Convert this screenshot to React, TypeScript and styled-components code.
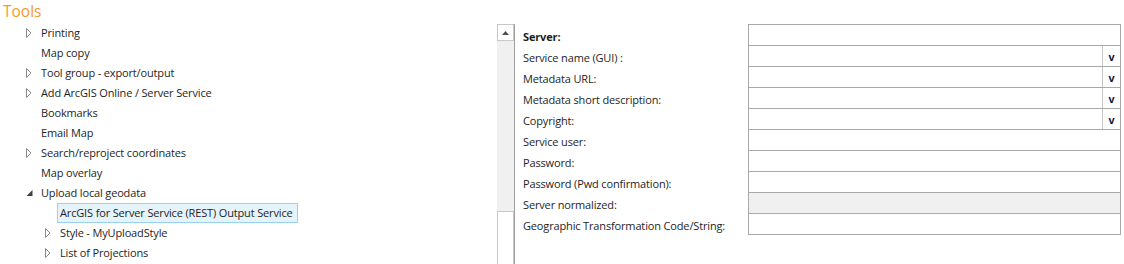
import React from 'react'
import styled, { createGlobalStyle } from 'styled-components'

const GlobalStyle = createGlobalStyle`
  html, body {
    margin: 0;
    padding: 0;
    background: #ffffff;
  }
  body {
    font-family: 'Open Sans', 'Noto Sans', sans-serif;
    font-size: 11px;
    letter-spacing: -0.15px;
    color: #1e1e1e;
  }
`

const Page = styled.div`
  width: 1124px;
  height: 264px;
  overflow: hidden;
  display: flex;
  flex-direction: column;
`

const Title = styled.div`
  height: 23px;
  padding-left: 3px;
  font-size: 15.5px;
  letter-spacing: 0;
  line-height: 22px;
  color: #f29b2c;
`

const Body = styled.div`
  flex: 1;
  display: flex;
  min-height: 0;
`

const TreePane = styled.div`
  width: 497px;
  display: flex;
  flex-direction: column;
`

const TreeRow = styled.div<{ level: number }>`
  height: 20px;
  display: flex;
  align-items: center;
  padding-left: ${(p) => 25 + p.level * 19}px;
`

const Toggle = styled.span`
  width: 16px;
  height: 20px;
  display: flex;
  align-items: center;
  justify-content: flex-start;
`

const TreeLabel = styled.span<{ selected?: boolean }>`
  height: 18px;
  line-height: 18px;
  padding: 0 4px 0 2px;
  margin-left: -3px;
  border: 1px solid ${(p) => (p.selected ? '#99d1f3' : 'transparent')};
  background: ${(p) => (p.selected ? '#e5f3fb' : 'transparent')};
  white-space: nowrap;
`

const ScrollBar = styled.div`
  width: 17px;
  display: flex;
  flex-direction: column;
  background: #f0f0f0;
  border-right: 1px solid #a0a0a0;
  margin-top: 1px;
`

const ScrollButton = styled.div`
  height: 15px;
  border: 1px solid #c8c8c8;
  background: #ffffff;
  display: flex;
  align-items: center;
  justify-content: center;
`

const ScrollThumb = styled.div`
  margin-top: auto;
  height: 52px;
  border: 1px solid #c8c8c8;
  border-bottom: none;
  background: #ffffff;
`

const Form = styled.div`
  display: flex;
  flex-direction: column;
  padding-left: 8px;
  padding-top: 1px;
`

const FormRow = styled.div`
  display: flex;
  height: 22px;
  & + & {
    margin-top: -1px;
  }
`

const FieldLabel = styled.div<{ bold?: boolean }>`
  width: 225px;
  display: flex;
  align-items: center;
  padding-top: 3px;
  box-sizing: border-box;
  font-weight: ${(p) => (p.bold ? 700 : 400)};
  white-space: nowrap;
`

const Field = styled.div<{ disabled?: boolean }>`
  width: 373px;
  box-sizing: border-box;
  display: flex;
  border: 1px solid #a9a9a9;
  background: ${(p) => (p.disabled ? '#f0f0f0' : '#ffffff')};
`

const FieldInput = styled.div`
  flex: 1;
`

const DropButton = styled.div`
  width: 17px;
  border-left: 1px solid #c4c4c4;
  display: flex;
  align-items: center;
  justify-content: center;
  font-family: 'Liberation Sans', Arial, sans-serif;
  font-weight: 700;
  font-size: 11px;
  letter-spacing: 0;
  color: #10103a;
  padding-top: 1px;
`

const Collapsed = () => (
  <svg width="8" height="10" viewBox="0 0 8 10">
    <path d="M1.5 0.5 L6 5 L1.5 9.5 Z" fill="none" stroke="#8a8a8a" strokeWidth="1" />
  </svg>
)

const Expanded = () => (
  <svg width="8" height="10" viewBox="0 0 8 10">
    <path d="M7.5 2 L7.5 8 L1.5 8 Z" fill="#404040" />
  </svg>
)

const UpArrow = () => (
  <svg width="7" height="4" viewBox="0 0 7 4">
    <path d="M0 4 L3.5 0 L7 4 Z" fill="#505050" />
  </svg>
)

type TreeItem = { label: string; level: number; state?: 'open' | 'closed'; selected?: boolean }

const treeItems: TreeItem[] = [
  { label: 'Printing', level: 0, state: 'closed' },
  { label: 'Map copy', level: 0 },
  { label: 'Tool group - export/output', level: 0, state: 'closed' },
  { label: 'Add ArcGIS Online / Server Service', level: 0, state: 'closed' },
  { label: 'Bookmarks', level: 0 },
  { label: 'Email Map', level: 0 },
  { label: 'Search/reproject coordinates', level: 0, state: 'closed' },
  { label: 'Map overlay', level: 0 },
  { label: 'Upload local geodata', level: 0, state: 'open' },
  { label: 'ArcGIS for Server Service (REST) Output Service', level: 1, selected: true },
  { label: 'Style - MyUploadStyle', level: 1, state: 'closed' },
  { label: 'List of Projections', level: 1, state: 'closed' },
]

type FormField = { label: string; bold?: boolean; dropdown?: boolean; disabled?: boolean }

const formFields: FormField[] = [
  { label: 'Server:', bold: true },
  { label: 'Service name (GUI) :', dropdown: true },
  { label: 'Metadata URL:', dropdown: true },
  { label: 'Metadata short description:', dropdown: true },
  { label: 'Copyright:', dropdown: true },
  { label: 'Service user:' },
  { label: 'Password:' },
  { label: 'Password (Pwd confirmation):' },
  { label: 'Server normalized:', disabled: true },
  { label: 'Geographic Transformation Code/String:' },
]

const App: React.FC = () => {
  return (
    <Page>
      <GlobalStyle />
      <Title>Tools</Title>
      <Body>
        <TreePane>
          {treeItems.map((item) => (
            <TreeRow key={item.label} level={item.level}>
              <Toggle>
                {item.state === 'closed' && <Collapsed />}
                {item.state === 'open' && <Expanded />}
              </Toggle>
              <TreeLabel selected={item.selected}>{item.label}</TreeLabel>
            </TreeRow>
          ))}
        </TreePane>
        <ScrollBar>
          <ScrollButton>
            <UpArrow />
          </ScrollButton>
          <ScrollThumb />
        </ScrollBar>
        <Form>
          {formFields.map((f) => (
            <FormRow key={f.label}>
              <FieldLabel bold={f.bold}>{f.label}</FieldLabel>
              <Field disabled={f.disabled}>
                <FieldInput />
                {f.dropdown && <DropButton>v</DropButton>}
              </Field>
            </FormRow>
          ))}
        </Form>
      </Body>
    </Page>
  )
}

export default App
